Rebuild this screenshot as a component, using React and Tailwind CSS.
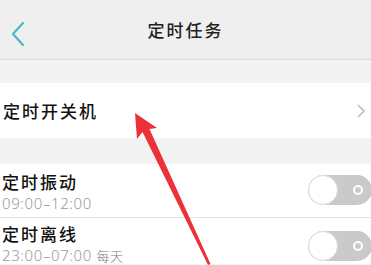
export default function App() {
  const cjk = { fontFamily: '"Noto Sans CJK SC", "Noto Sans", sans-serif' };
  const Toggle = () => (
    <div className="relative h-[30px] w-[64px] shrink-0 rounded-full bg-[#cacaca]">
      <div className="absolute left-0 top-0 h-[30px] w-[30px] rounded-full border border-[#dcdcdc] bg-white" />
      <div className="absolute right-[9px] top-[10px] h-[10px] w-[10px] rounded-full border-2 border-white" />
    </div>
  );
  const timeStyle = { fontFamily: '"Noto Sans", "Noto Sans CJK SC", sans-serif' };
  return (
    <div className="relative h-[265px] w-[371px] overflow-hidden bg-[#f3f3f3]" style={cjk}>
      <div className="relative flex h-[60px] items-center justify-center border-b border-[#d8d8d8] bg-[#efefef]">
        <svg className="absolute left-[11px] top-[21px]" width="14" height="26" viewBox="0 0 14 26">
          <path d="M12 2 L2 13 L12 24" fill="none" stroke="#4db6cf" strokeWidth="2.2" strokeLinecap="round" strokeLinejoin="round" />
        </svg>
        <span className="text-[17px] font-medium tracking-[2px] text-[#222]">定时任务</span>
      </div>
      <div className="h-[23px]" />
      <div className="flex h-[55px] items-center justify-between bg-white pl-[3px] pr-[6px]">
        <span className="text-[17px] font-medium tracking-[2px] text-[#111]">定时开关机</span>
        <svg width="8" height="14" viewBox="0 0 8 14">
          <path d="M1 1 L7 7 L1 13" fill="none" stroke="#bdbdbd" strokeWidth="1.6" />
        </svg>
      </div>
      <div className="h-[26px]" />
      <div className="bg-white">
        <div className="flex h-[54px] items-start justify-between border-b border-[#e4e4e4] pl-[2px] pt-[6px]">
          <div className="flex flex-col">
            <span className="text-[17px] font-medium leading-[24px] tracking-[2px] text-[#111]">定时振动</span>
            <span className="text-[15px] font-light leading-[18px] tracking-[0.6px] text-[#999]" style={timeStyle}>09:00–12:00</span>
          </div>
          <div className="-mr-[1px] mt-[5px]"><Toggle /></div>
        </div>
        <div className="flex h-[46px] items-start justify-between pl-[2px] pt-[4px]">
          <div className="flex flex-col">
            <span className="text-[17px] font-medium leading-[24px] tracking-[2px] text-[#111]">定时离线</span>
            <span className="text-[15px] font-light leading-[18px] tracking-[0.6px] text-[#999]" style={timeStyle}>23:00–07:00 <span className="text-[13px] text-[#777]">每天</span></span>
          </div>
          <div className="-mr-[1px] mt-[9px]"><Toggle /></div>
        </div>
      </div>
      <svg className="pointer-events-none absolute left-0 top-0" width="371" height="265" viewBox="0 0 371 265">
        <polygon points="135,113 157,128 149.5,129 210.5,264 208,265 142.5,132 137,139" fill="#ec3238" />
      </svg>
    </div>
  );
}
